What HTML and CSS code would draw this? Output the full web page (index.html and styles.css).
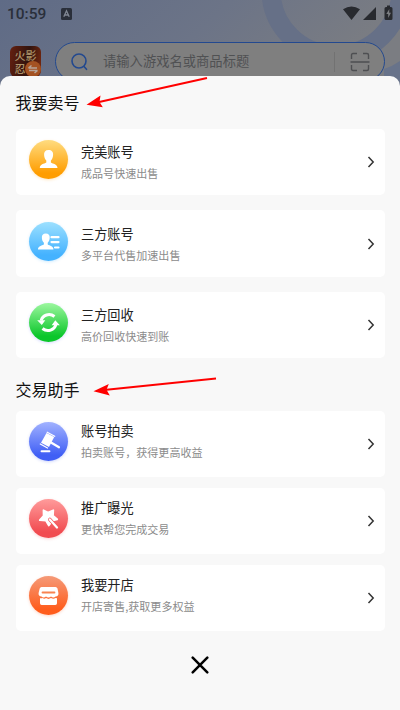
FILE: index.html
```html
<!DOCTYPE html>
<html lang="zh-CN">
<head>
<meta charset="utf-8">
<title>我要卖号</title>
<link rel="stylesheet" href="styles.css">
</head>
<body>
<div class="screen">
  <header class="top">
    <svg class="backdrop" width="400" height="90" viewBox="0 0 400 90">
      <defs><linearGradient id="sky" x1="0" y1="0" x2="1" y2=".25"><stop offset="0" stop-color="#5f6b86"/><stop offset=".55" stop-color="#6c7487"/><stop offset="1" stop-color="#7b7d82"/></linearGradient></defs>
      <rect width="400" height="90" fill="url(#sky)"/>
      <circle cx="336" cy="-10" r="65" fill="none" stroke="#667087" stroke-width="19"/>
      <path d="M384 69Q393 66 400 61V90H384Z" fill="#68738a"/>
    </svg>
    <div class="status">
      <span class="time">10:59</span>
      <svg class="badge" width="11" height="12" viewBox="0 0 11 12"><rect width="11" height="12" rx="1.5" fill="#2a2f3a"/><path d="M2.8 8.8L5.5 2.8 8.2 8.8M3.8 7H7.2" fill="none" stroke="#808794" stroke-width="1.3"/></svg>
      <svg class="signals" width="52" height="16" viewBox="0 0 52 16"><path d="M0 4.3Q8.5-1.5 17 4.3L8.5 15ZM33 2V15H20ZM41.5 3.5Q41.5 2 43 2H44V.5H47V2H48Q49.5 2 49.5 3.5V13.5Q49.5 15 48 15H43Q41.5 15 41.5 13.5Z" fill="#282a2f"/><path d="M46.3 4L43.3 9H45.2V13L48 7.8H46.2Z" fill="#7c7e82"/></svg>
    </div>
    <div class="searchrow">
      <div class="game"><span>火影</span><span>忍</span>
        <svg class="swap" width="16" height="16" viewBox="0 0 16 16"><circle cx="8" cy="8" r="8" fill="#a45222"/><path d="M3.5 7H12M3.5 7L6.5 4.5M12.5 9.5H4M12.5 9.5L9.5 12" fill="none" stroke="#b6a59a" stroke-width="1.5"/></svg>
      </div>
      <div class="search">
        <svg width="18" height="18" viewBox="0 0 18 18" fill="none" stroke="#23498f" stroke-width="1.6" stroke-linecap="round"><circle cx="8" cy="8" r="7"/><path d="M13 13.5L15.5 16.3"/></svg>
        <span class="hint">请输入游戏名或商品标题</span>
        <i class="divider"></i>
        <svg width="20" height="20" viewBox="0 0 20 20" fill="none" stroke="#4e4f52" stroke-width="1.4"><path d="M1.5 7V3Q1.5 1.5 3 1.5H7M13 1.5H17Q18.5 1.5 18.5 3V7M18.5 13V17Q18.5 18.5 17 18.5H13M7 18.5H3Q1.5 18.5 1.5 17V13M.5 10H19.5"/></svg>
      </div>
    </div>
  </header>
  <main class="sheet">
    <h2>我要卖号</h2>
    <section class="sell">
      <article class="card">
        <div class="icon gold"><svg width="39" height="39" viewBox="0 0 39 39"><path d="M19.5 10C16.3 10 14.8 12 15.1 15C15.3 17.5 16 19.5 17.3 20.5V22.5C15 24 10.8 24 10.8 28H28.5C28.5 24 24 24 21.9 22.5V20.5C23.2 19.5 23.9 17.5 24.1 15C24.4 12 22.7 10 19.5 10Z" fill="#fff"/></svg></div>
        <div class="copy"><h3>完美账号</h3><p>成品号快速出售</p></div>
        <svg class="go" width="8" height="12" viewBox="0 0 8 12"><path d="M1.5 1L6.2 6 1.5 11"/></svg>
      </article>
      <article class="card">
        <div class="icon blue"><svg width="39" height="39" viewBox="0 0 39 39"><path d="M16.8 11.5C14 11.5 12.6 13.2 12.9 16C13 18.2 13.7 19.7 14.9 20.7V22.5C12.5 23.8 9 24 9 27.5H24.5C24.5 24 20.8 23.8 18.7 22.5V20.7C19.9 19.7 20.5 18.2 20.7 16C21 13.2 19.5 11.5 16.8 11.5Z" fill="#fff"/><path d="M22.5 15.2H29.5M22.5 20.1H29.5M26 25.500H29.500" stroke="#fff" stroke-width="2.2" stroke-linecap="round"/></svg></div>
        <div class="copy"><h3>三方账号</h3><p>多平台代售加速出售</p></div>
        <svg class="go" width="8" height="12" viewBox="0 0 8 12"><path d="M1.5 1L6.2 6 1.5 11"/></svg>
      </article>
      <article class="card">
        <div class="icon green"><svg width="39" height="39" viewBox="0 0 39 39"><path d="M25.5 13.5C20.5 9.7 13.5 12 12.2 17.5M13.5 25.5C18.5 29.5 25.6 27 26.8 21.7" fill="none" stroke="#fff" stroke-width="3"/><path d="M8.2 17.2H16.3L12.8 22ZM30.8 22.2H22.7L26.3 17.3Z" fill="#fff"/></svg></div>
        <div class="copy"><h3>三方回收</h3><p>高价回收快速到账</p></div>
        <svg class="go" width="8" height="12" viewBox="0 0 8 12"><path d="M1.5 1L6.2 6 1.5 11"/></svg>
      </article>
    </section>
    <h2 class="helper">交易助手</h2>
    <section class="tools">
      <article class="card">
        <div class="icon indigo"><svg width="39" height="39" viewBox="0 0 39 39"><path d="M17.5 11L25.2 15 20 25 12 20.800Z" fill="#fff"/><path d="M18.2 10.200L25.700 14.200M11.300 22L18.500 26" stroke="#fff" stroke-width="1.300" stroke-linecap="round"/><path d="M22 20.500L30 25.300" stroke="#fff" stroke-width="2.200" stroke-linecap="round"/><path d="M12.500 29.300H20.500" stroke="#fff" stroke-width="1.900" stroke-linecap="round"/></svg></div>
        <div class="copy"><h3>账号拍卖</h3><p>拍卖账号，获得更高收益</p></div>
        <svg class="go" width="8" height="12" viewBox="0 0 8 12"><path d="M1.5 1L6.2 6 1.5 11"/></svg>
      </article>
      <article class="card">
        <div class="icon red"><svg width="39" height="39" viewBox="0 0 39 39"><path d="M14.5 11.200L19 13.600 24.300 11.200 24 16.800 28.200 20.300 23.400 21.600 19.800 26.500 17 21.700 10.800 21.200 14.600 16.800Z" fill="#fff" stroke="#fff" stroke-width="1.800" stroke-linejoin="round"/><path d="M20.800 20.500L28 28.500" stroke="#f25d61" stroke-width="3.600" stroke-linecap="round"/><path d="M20.800 20.500L28 28.500" stroke="#fff" stroke-width="2.200" stroke-linecap="round"/></svg></div>
        <div class="copy"><h3>推广曝光</h3><p>更快帮您完成交易</p></div>
        <svg class="go" width="8" height="12" viewBox="0 0 8 12"><path d="M1.5 1L6.2 6 1.5 11"/></svg>
      </article>
      <article class="card">
        <div class="icon orange"><svg width="39" height="39" viewBox="0 0 39 39"><path d="M12.5 11H26.5Q28 11 28.5 12.5L29.4 17V18.5Q28.5 20.8 26.5 20.5Q24.5 22.5 22 20.5Q19.5 22.5 17 20.5Q14.5 22.5 12.5 20.5Q10.5 20.8 9.6 18.5V17L10.7 12.5Q11.2 11 12.5 11Z" fill="#fff"/><path d="M11 22.2Q12.5 22.5 13.5 22.1Q15.3 23.2 17 22.1Q19.5 23.7 22 22.1Q24.5 23.5 26.5 22.1L28 22.2V27.3Q28 29 26.3 29H12.7Q11 29 11 27.3Z" fill="#fff"/><path d="M13.5 16.5H25.5" stroke="#f88350" stroke-width="1.8" stroke-linecap="round"/></svg></div>
        <div class="copy"><h3>我要开店</h3><p>开店寄售,获取更多权益</p></div>
        <svg class="go" width="8" height="12" viewBox="0 0 8 12"><path d="M1.5 1L6.2 6 1.5 11"/></svg>
      </article>
    </section>
    <svg class="close" width="18" height="18" viewBox="0 0 18 18"><path d="M1.7 1.7L16.3 16.3M16.3 1.7L1.7 16.3" stroke="#000" stroke-width="2.5" stroke-linecap="round"/></svg>
  </main>
  <svg class="arrows" width="400" height="710" viewBox="0 0 400 710"><path d="M98 102.3L207 78M104 389.9L216 378.5" stroke="#f00" stroke-width="2"/><path d="M86.5 104.7L100.5 95.5 99.5 102 102.8 107.2ZM93.5 391.2L108.8 384 106.5 389.8 109.8 395.5Z" fill="#f00"/></svg>
</div>
</body>
</html>
```
FILE: styles.css
```css
* { box-sizing: border-box; }
body { margin: 0; font-family: "Noto Sans CJK SC", sans-serif; }
.screen { position: relative; width: 400px; height: 710px; overflow: hidden; background: #f8f8f8; }
.top { position: relative; height: 76px; }
.backdrop { position: absolute; top: 0; left: 0; display: block; }
.status { position: relative; display: flex; align-items: center; height: 28px; padding: 0 5px 0 7px; }
.time { width: 54px; font: 500 15.5px/28px Roboto, sans-serif; color: #2a2f3a; }
.badge { margin-top: -1px; }
.signals { margin-left: auto; margin-top: -3px; }
.searchrow { position: relative; display: flex; align-items: flex-start; gap: 14px; padding: 14px 15px 0 10px; }
.game { position: relative; display: flex; flex-direction: column; gap: 1px; width: 31px; height: 31px; margin-top: 4px; padding: 3px 4.5px; border-radius: 6px; background: linear-gradient(100deg, #65200f, #32140e 55%, #7b2a10); color: #ad956a; font-size: 11px; line-height: 12px; font-weight: 500; white-space: nowrap; }
.swap { position: absolute; right: 0; bottom: 0; }
.search { display: flex; align-items: center; flex: 1; height: 39px; padding: 0 14px 0 15px; border: 1.5px solid #23498f; border-radius: 20px; background: #7f7f7f; }
.hint { margin: -2px 0 0 14px; font-size: 13.3px; line-height: 20px; color: #505153; white-space: nowrap; }
.divider { width: 1px; height: 20px; margin: 0 15px 0 auto; background: #727272; }
.sheet { position: relative; display: flex; flex-direction: column; height: 634px; padding: 16px 15.5px 0; border-radius: 10px 10px 0 0; background: #f8f8f8; }
h2 { height: 20px; margin: 0 0 16.5px; font-size: 16px; line-height: 20px; font-weight: 400; color: #111; }
.helper { margin: 20.5px 0 12px; }
.sell { display: grid; gap: 15.3px; }
.tools { display: grid; gap: 10.5px; }
.card { display: flex; align-items: flex-start; height: 66.4px; padding: 11.5px 10px 0 13.5px; border-radius: 5px; background: #fff; }
.icon { width: 39px; height: 39px; border-radius: 50%; }
.icon svg { display: block; }
.gold { background: linear-gradient(#ffdc80, #ff9d00 85%); box-shadow: 0 1px 3px #ffa00040; }
.blue { background: linear-gradient(#9ce0ff, #44b2ff 85%); box-shadow: 0 1px 3px #44b2ff40; }
.green { background: linear-gradient(#9cf79f, #0bc62b 85%); box-shadow: 0 1px 3px #6070ff40; }
.indigo { background: linear-gradient(#a1b2ff, #405ff5 85%); box-shadow: 0 1px 3px #405ff540; }
.red { background: linear-gradient(#ff9b9b, #f14b50 85%); box-shadow: 0 1px 3px #f14b5040; }
.orange { background: linear-gradient(#f59a78, #ff5d1d 85%); box-shadow: 0 1px 3px #ff5d1d40; }
.copy { margin-left: 13px; padding-top: 2px; }
.tools .copy { padding-top: 0; margin-top: -1px; }
h3 { margin: 0 0 2px; font-size: 13.2px; line-height: 20px; font-weight: 400; color: #222; }
p { margin: 0; font-size: 11.05px; line-height: 18px; color: #8b8b8b; white-space: nowrap; }
.go { margin: 16px 0 0 auto; fill: none; stroke: #333; stroke-width: 1.5; }
.close { align-self: center; margin-top: 25.5px; }
.arrows { position: absolute; top: 0; left: 0; pointer-events: none; }
```
